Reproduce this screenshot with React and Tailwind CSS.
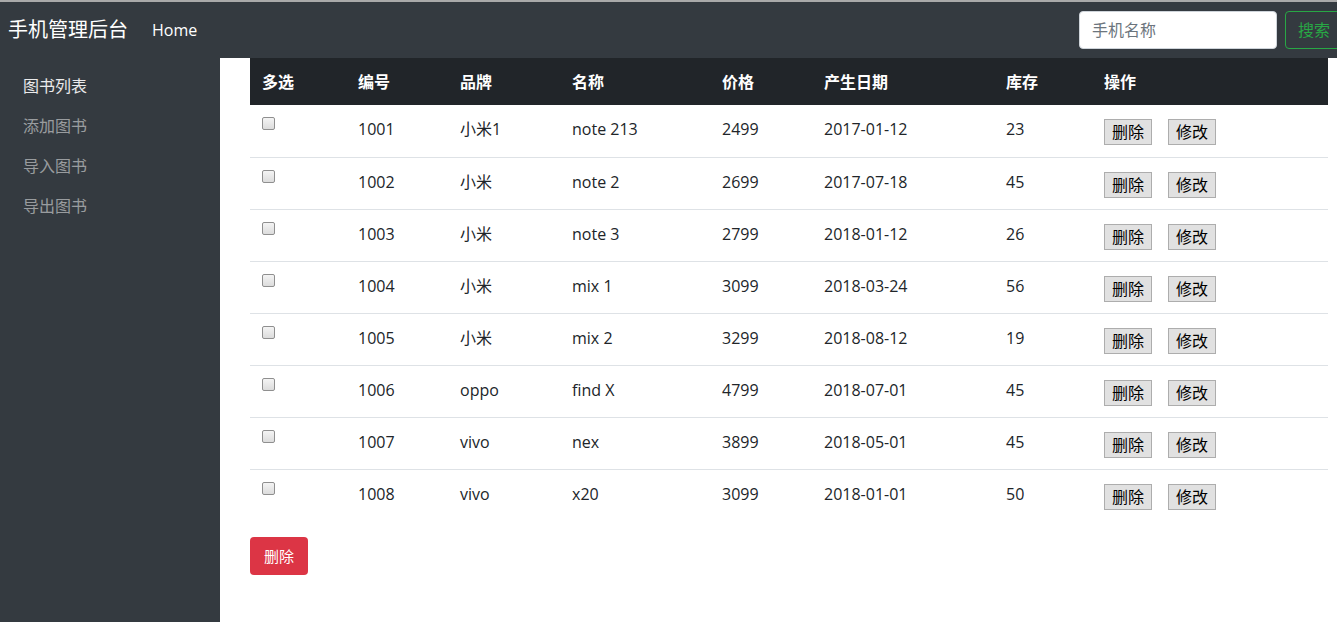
import React from "react";

const rows = [
  ["1001", "小米1", "note 213", "2499", "2017-01-12", "23"],
  ["1002", "小米", "note 2", "2699", "2017-07-18", "45"],
  ["1003", "小米", "note 3", "2799", "2018-01-12", "26"],
  ["1004", "小米", "mix 1", "3099", "2018-03-24", "56"],
  ["1005", "小米", "mix 2", "3299", "2018-08-12", "19"],
  ["1006", "oppo", "find X", "4799", "2018-07-01", "45"],
  ["1007", "vivo", "nex", "3899", "2018-05-01", "45"],
  ["1008", "vivo", "x20", "3099", "2018-01-01", "50"],
];

const widths = ["w-[96px]", "w-[102px]", "w-[112px]", "w-[150px]", "w-[102px]", "w-[182px]", "w-[98px]", "w-[200px]"];
const heads = ["多选", "编号", "品牌", "名称", "价格", "产生日期", "库存", "操作"];

const font = "font-['Open_Sans','Noto_Sans_CJK_SC',sans-serif]";

function SmallButton({ children }) {
  return (
    <button className="h-[26px] w-[48px] bg-[#e1e1e1] border border-[#adadad] text-[16px] leading-none text-black">
      {children}
    </button>
  );
}

export default function App() {
  return (
    <div className={`w-[1337px] h-[622px] overflow-hidden flex flex-col bg-white ${font}`}>
      <div className="h-[2px] bg-[#a9a9a9]" />
      {/* navbar */}
      <div className="h-[56px] bg-[#343a40] flex items-center pl-[8px] shrink-0">
        <span className="text-white text-[20px] leading-none">手机管理后台</span>
        <span className="text-white text-[16px] ml-[24px]">Home</span>
        <div className="ml-auto flex items-center gap-[8px] mr-[-6px]">
          <div className="w-[198px] h-[38px] bg-white rounded-[4px] border border-[#ced4da] flex items-center px-[12px] text-[16px] text-[#6c757d]">
            手机名称
          </div>
          <button className="h-[38px] px-[12px] rounded-[4px] border border-[#28a745] text-[#28a745] text-[16px]">
            搜索
          </button>
        </div>
      </div>
      <div className="flex flex-1">
        {/* sidebar */}
        <div className="w-[220px] bg-[#343a40] pt-[8px] pl-[23px] flex flex-col shrink-0">
          {["图书列表", "添加图书", "导入图书", "导出图书"].map((t, i) => (
            <div
              key={t}
              className={`h-[40px] flex items-center text-[16px] ${i === 0 ? "text-white/90" : "text-white/50"}`}
            >
              {t}
            </div>
          ))}
        </div>
        {/* content */}
        <div className="flex-1 pl-[30px] pr-[9px]">
          <div className="flex h-[47px] bg-[#212529] text-white font-bold text-[16px] items-center">
            {heads.map((h, i) => (
              <div key={h} className={`${widths[i]} pl-[12px]`}>
                {h}
              </div>
            ))}
          </div>
          {rows.map((r, idx) => (
            <div
              key={r[0]}
              className={`flex h-[52px] text-[16px] text-[#212529] ${idx > 0 ? "border-t border-[#dee2e6]" : ""}`}
            >
              <div className={`${widths[0]} pl-[12px] pt-[12px]`}>
                <div className="w-[13px] h-[13px] rounded-[2px] border border-[#8f8f8f] bg-gradient-to-b from-[#f4f4f4] to-[#dcdcdc]" />
              </div>
              {r.map((c, i) => (
                <div key={i} className={`${widths[i + 1]} pl-[12px] pt-[12px] leading-[24px]`}>
                  {c}
                </div>
              ))}
              <div className={`${widths[7]} pl-[12px] pt-[14px] flex gap-[16px] items-start`}>
                <SmallButton>删除</SmallButton>
                <SmallButton>修改</SmallButton>
              </div>
            </div>
          ))}
          <button className="mt-[16px] h-[38px] w-[58px] rounded-[4px] bg-[#dc3545] text-white text-[15px]">
            删除
          </button>
        </div>
      </div>
    </div>
  );
}
